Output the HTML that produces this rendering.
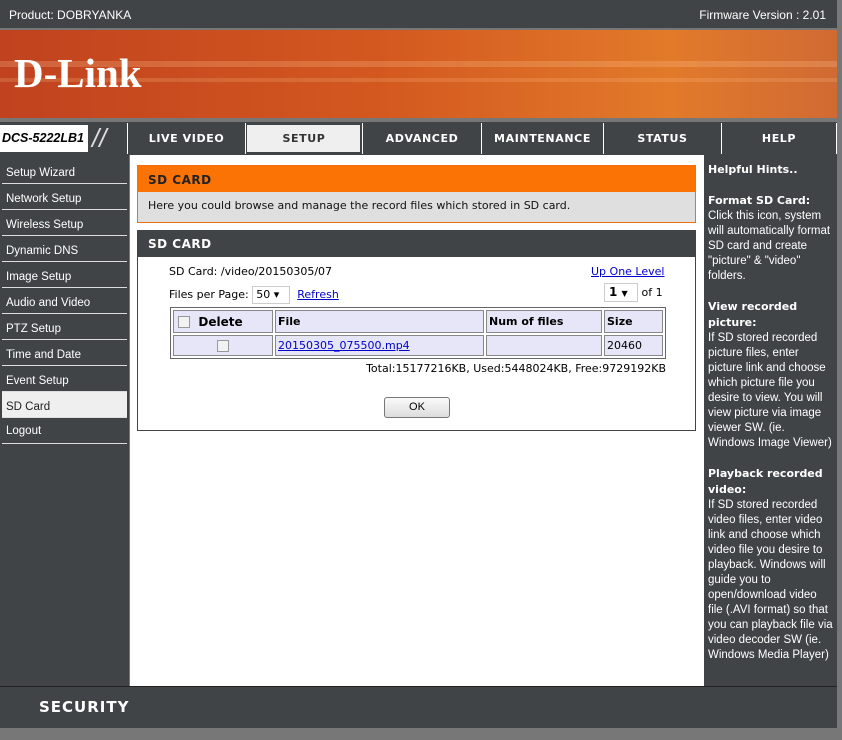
<!DOCTYPE html>
<html><head><style>
*{margin:0;padding:0;box-sizing:border-box}
body{width:842px;height:740px;background:#777;position:relative;overflow:hidden;font-family:"Liberation Sans",sans-serif;font-size:11px}
.a{position:absolute}
.top{left:0;top:0;width:837px;height:28px;background:#404446;color:#fff;font-size:12px}
.banner{left:0;top:30px;width:837px;height:88px;background:linear-gradient(90deg,#c0421f 0%,#d3581f 45%,#e27a2a 80%,#d06a33 100%)}
.nav{left:0;top:122px;width:837px;height:33px;background:#404446}
.nc{position:absolute;top:1px;height:31px;color:#fff;font-family:"DejaVu Sans",sans-serif;font-weight:bold;font-size:11px;letter-spacing:.6px;text-align:center;line-height:31px;border-left:1px solid #fff}
.side{left:0;top:155px;width:129px;height:531px;background:#404446}
.si{position:absolute;left:2px;width:125px;height:26px;color:#fff;font-size:11.5px;padding-left:4px;padding-top:2px;line-height:26px;border-bottom:1px solid #ddd}
.main{left:130px;top:155px;width:574px;height:531px;background:#fff}
.hint{left:704px;top:155px;width:133px;height:531px;background:#404446;color:#fff;font-size:11.5px;line-height:15px;padding:7px 4px 0 4px;font-family:"Liberation Sans",sans-serif}
.hint b{font-family:"DejaVu Sans",sans-serif;font-size:11px}
.foot{left:0;top:686px;width:837px;height:42px;background:#404446;border-top:1px solid #222}
.v{font-family:"DejaVu Sans",sans-serif}
a{color:#00c;text-decoration:underline}
td{border:1px solid #888;background:#e6e6f8;font-size:11px;font-family:"DejaVu Sans",sans-serif;padding:0 2px}
.cb{display:inline-block;width:12px;height:12px;border:1px solid #999;background:#f2f2f2;vertical-align:middle}
</style></head><body>
<div class="a top"><span class="a" style="left:9px;top:8px">Product: DOBRYANKA</span><span class="a" style="right:11px;top:8px">Firmware Version : 2.01</span></div>
<div class="a banner">
<div class="a" style="left:0;top:31px;width:837px;height:6px;background:rgba(255,200,150,.25)"></div>
<div class="a" style="left:0;top:48px;width:837px;height:4px;background:rgba(255,200,150,.2)"></div>
<div class="a" style="left:14px;top:19px;color:#fff;font-family:'Liberation Serif',serif;font-weight:bold;font-size:41px;letter-spacing:0px">D-Link</div>
</div>
<div class="a nav">
<div class="a" style="left:0;top:3px;width:88px;height:27px;background:#fff;color:#000;font-weight:bold;font-style:italic;font-size:12.5px;line-height:27px;padding-left:2px">DCS-5222LB1</div>
<div class="a" style="left:92px;top:2px;color:#ddd;font-size:26px;font-style:italic;line-height:28px">//</div>
<div class="nc" style="left:127px;width:118px">LIVE VIDEO</div>
<div class="nc" style="left:245px;width:117px;color:#333"><div style="position:absolute;left:1px;top:2px;right:2px;bottom:2px;background:#efefef"></div><span style="position:relative">SETUP</span></div>
<div class="nc" style="left:362px;width:119px">ADVANCED</div>
<div class="nc" style="left:481px;width:122px">MAINTENANCE</div>
<div class="nc" style="left:603px;width:118px">STATUS</div>
<div class="nc" style="left:721px;width:116px;border-right:1px solid #fff">HELP</div>
</div>
<div class="a side">
<div class="si" style="top:3px">Setup Wizard</div>
<div class="si" style="top:29px">Network Setup</div>
<div class="si" style="top:55px">Wireless Setup</div>
<div class="si" style="top:81px">Dynamic DNS</div>
<div class="si" style="top:107px">Image Setup</div>
<div class="si" style="top:133px">Audio and Video</div>
<div class="si" style="top:159px">PTZ Setup</div>
<div class="si" style="top:185px">Time and Date</div>
<div class="si" style="top:211px">Event Setup</div>
<div class="si" style="top:237px;background:#efefef;color:#222">SD Card</div>
<div class="si" style="top:263px;padding-top:0">Logout</div>
</div>
<div class="a main">
<div class="a" style="left:7px;top:10px;width:559px;height:58px;border:1px solid #f07010;background:#dfdfdf">
<div class="v" style="height:26px;background:#fb7304;color:#222;font-weight:bold;font-size:12px;line-height:28px;padding-left:10px;letter-spacing:.5px">SD CARD</div>
<div class="v" style="font-size:11px;padding:7px 0 0 10px;color:#111">Here you could browse and manage the record files which stored in SD card.</div>
</div>
<div class="a" style="left:7px;top:75px;width:559px;height:201px;border:1px solid #404446">
<div class="v" style="height:26px;background:#404446;color:#fff;font-weight:bold;font-size:12px;line-height:26px;padding-left:10px;letter-spacing:.5px">SD CARD</div>
<div class="a v" style="left:31px;top:34px;font-size:11px">SD Card: /video/20150305/07</div>
<a class="a v" style="left:453px;top:34px;font-size:11px">Up One Level</a>
<div class="a v" style="left:31px;top:55px;font-size:11px">Files per Page: <span style="display:inline-block;border:1px solid #ccc;width:38px;height:18px;font-size:11px;line-height:16px;padding-left:3px;vertical-align:middle">50 &#9662;</span> &nbsp;<a>Refresh</a></div>
<div class="a v" style="left:466px;top:52px;font-size:11px"><span style="display:inline-block;border:1px solid #ccc;width:34px;height:19px;font-weight:bold;font-size:12px;line-height:17px;padding-left:4px">1 <span style="font-size:8px">&#9660;</span></span> of 1</div>
<table class="a" style="left:32px;top:76px;width:496px;border-collapse:separate;border-spacing:2px;border:1px solid #666;background:#fff">
<tr style="height:23px"><td style="width:100px;font-weight:bold;font-size:12px;padding-left:4px"><span class="cb"></span>&nbsp; Delete</td><td style="width:209px;font-weight:bold">File</td><td style="width:116px;font-weight:bold">Num of files</td><td style="font-weight:bold">Size</td></tr>
<tr style="height:21px"><td style="text-align:center"><span class="cb"></span></td><td><a>20150305_075500.mp4</a></td><td></td><td>20460</td></tr>
</table>
<div class="a v" style="right:29px;top:131px;font-size:11px">Total:15177216KB, Used:5448024KB, Free:9729192KB</div>
<div class="a" style="left:246px;top:166px;width:66px;height:21px;border:1px solid #777;border-radius:3px;background:linear-gradient(#fafafa,#ddd);text-align:center;line-height:19px;font-size:11px">OK</div>
</div>
</div>
<div class="a hint"><b>Helpful Hints..</b><br><br><b>Format SD Card:</b><br>Click this icon, system will automatically format SD card and create "picture" &amp; "video" folders.<br><br><b>View recorded picture:</b><br>If SD stored recorded picture files, enter picture link and choose which picture file you desire to view. You will view picture via image viewer SW. (ie. Windows Image Viewer)<br><br><b>Playback recorded video:</b><br>If SD stored recorded video files, enter video link and choose which video file you desire to playback. Windows will guide you to open/download video file (.AVI format) so that you can playback file via video decoder SW (ie. Windows Media Player)</div>
<div class="a foot"><div class="a" style="left:39px;top:11px;color:#fff;font-weight:bold;font-size:15px;letter-spacing:1px;font-family:'DejaVu Sans',sans-serif">SECURITY</div></div>
</body></html>
